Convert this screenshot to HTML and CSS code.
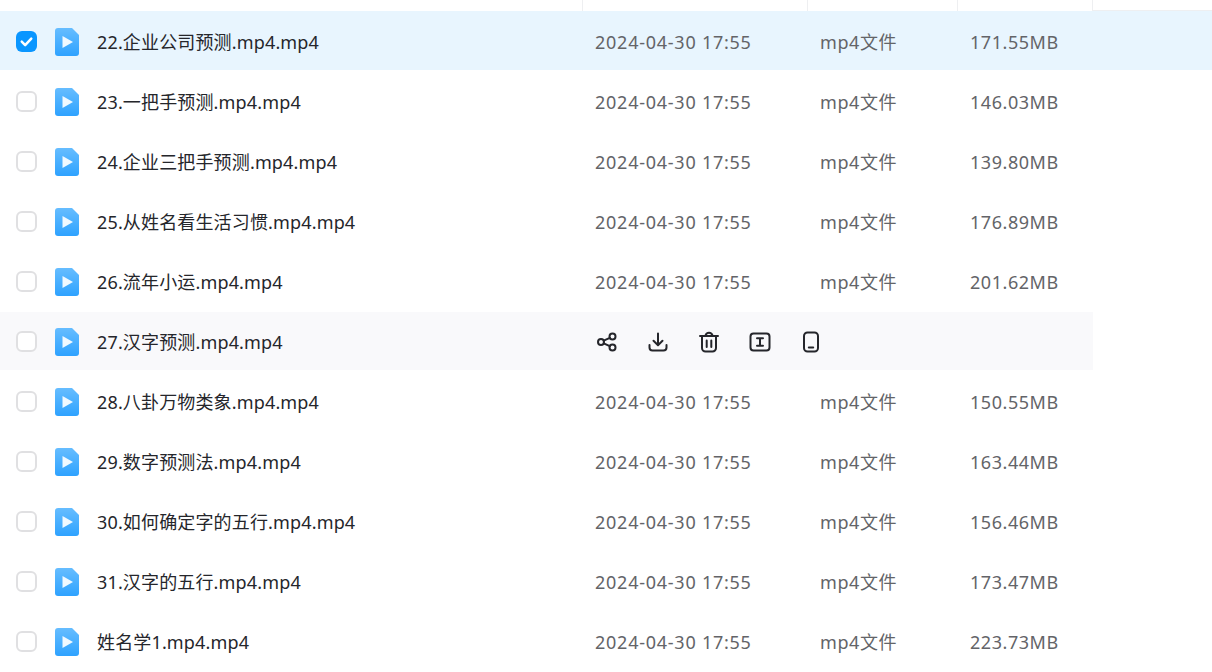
FILE: index.html
```html
<!doctype html>
<html lang="en">
  <head>
    <meta charset="UTF-8" />
    <title>文件列表</title>
    <link rel="stylesheet" href="styles.css">
  </head>
  <body>
    <svg class="defs" width="0" height="0">
      <symbol id="file" viewBox="0 0 24 28">
        <defs>
          <linearGradient id="fileFill" x1="0" y1="0" x2="0" y2="1">
            <stop offset="0" stop-color="#66bdff" />
            <stop offset="1" stop-color="#2ea2ff" />
          </linearGradient>
        </defs>
        <path d="M3 0H17L24 7V25a3 3 0 0 1-3 3H3a3 3 0 0 1-3-3V3a3 3 0 0 1 3-3Z" fill="url(#fileFill)" />
        <path d="M7.5 8 18 14 7.5 20Z" fill="#fff" opacity="0.92" />
      </symbol>
    </svg>

    <div class="head">
      <div class="head-cell name"></div>
      <div class="head-cell date"></div>
      <div class="head-cell type"></div>
      <div class="head-cell size"></div>
      <div class="head-rest"></div>
    </div>

    <div class="list">
      <div class="row selected">
        <span class="check on">
          <svg viewBox="0 0 22 22" width="21" height="21"><path d="M6 11.2 9.6 14.8 16 8" fill="none" stroke="#fff" stroke-width="2.6" stroke-linecap="round" stroke-linejoin="round" /></svg>
        </span>
        <svg class="file"><use href="#file" /></svg>
        <span class="title">22.企业公司预测.mp4.mp4</span>
        <span class="date-text">2024-04-30 17:55</span>
        <span class="type-text">mp4文件</span>
        <span class="size-text">171.55MB</span>
      </div>
      <div class="row">
        <span class="check"></span>
        <svg class="file"><use href="#file" /></svg>
        <span class="title">23.一把手预测.mp4.mp4</span>
        <span class="date-text">2024-04-30 17:55</span>
        <span class="type-text">mp4文件</span>
        <span class="size-text">146.03MB</span>
      </div>
      <div class="row">
        <span class="check"></span>
        <svg class="file"><use href="#file" /></svg>
        <span class="title">24.企业三把手预测.mp4.mp4</span>
        <span class="date-text">2024-04-30 17:55</span>
        <span class="type-text">mp4文件</span>
        <span class="size-text">139.80MB</span>
      </div>
      <div class="row">
        <span class="check"></span>
        <svg class="file"><use href="#file" /></svg>
        <span class="title">25.从姓名看生活习惯.mp4.mp4</span>
        <span class="date-text">2024-04-30 17:55</span>
        <span class="type-text">mp4文件</span>
        <span class="size-text">176.89MB</span>
      </div>
      <div class="row">
        <span class="check"></span>
        <svg class="file"><use href="#file" /></svg>
        <span class="title">26.流年小运.mp4.mp4</span>
        <span class="date-text">2024-04-30 17:55</span>
        <span class="type-text">mp4文件</span>
        <span class="size-text">201.62MB</span>
      </div>
      <div class="row hover">
        <span class="check"></span>
        <svg class="file"><use href="#file" /></svg>
        <span class="title">27.汉字预测.mp4.mp4</span>
        <div class="actions">
          <svg viewBox="0 0 22 22"><circle cx="5" cy="11" r="3" /><circle cx="16.5" cy="5.5" r="3" /><circle cx="16.5" cy="16.5" r="3" /><path d="M7.7 9.7 13.8 6.8M7.7 12.3 13.8 15.2" /></svg>
          <svg viewBox="0 0 22 22"><path d="M11 2.5V14M6.5 9.8 11 14.3 15.5 9.8M2.5 14v2.5a3 3 0 0 0 3 3h11a3 3 0 0 0 3-3V14" /></svg>
          <svg viewBox="0 0 22 22"><path d="M2 5h18M7.5 4.6C8 2.6 9 1.8 11 1.8S14 2.6 14.5 4.6M4 5V17a3.5 3.5 0 0 0 3.5 3.5h7A3.5 3.5 0 0 0 18 17V5M8.7 9.5v6.5M13.3 9.5v6.5" /></svg>
          <svg viewBox="0 0 22 22"><rect x="1.5" y="2.5" width="19" height="17" rx="3" /><path d="M8 7.2h6M8 14.8h6M11 7.2v7.6" /></svg>
          <svg viewBox="0 0 22 22"><rect x="4" y="1.5" width="14" height="19" rx="3.5" /><path d="M8.8 16.5h4.4" /></svg>
        </div>
      </div>
      <div class="row">
        <span class="check"></span>
        <svg class="file"><use href="#file" /></svg>
        <span class="title">28.八卦万物类象.mp4.mp4</span>
        <span class="date-text">2024-04-30 17:55</span>
        <span class="type-text">mp4文件</span>
        <span class="size-text">150.55MB</span>
      </div>
      <div class="row">
        <span class="check"></span>
        <svg class="file"><use href="#file" /></svg>
        <span class="title">29.数字预测法.mp4.mp4</span>
        <span class="date-text">2024-04-30 17:55</span>
        <span class="type-text">mp4文件</span>
        <span class="size-text">163.44MB</span>
      </div>
      <div class="row">
        <span class="check"></span>
        <svg class="file"><use href="#file" /></svg>
        <span class="title">30.如何确定字的五行.mp4.mp4</span>
        <span class="date-text">2024-04-30 17:55</span>
        <span class="type-text">mp4文件</span>
        <span class="size-text">156.46MB</span>
      </div>
      <div class="row">
        <span class="check"></span>
        <svg class="file"><use href="#file" /></svg>
        <span class="title">31.汉字的五行.mp4.mp4</span>
        <span class="date-text">2024-04-30 17:55</span>
        <span class="type-text">mp4文件</span>
        <span class="size-text">173.47MB</span>
      </div>
      <div class="row">
        <span class="check"></span>
        <svg class="file"><use href="#file" /></svg>
        <span class="title">姓名学1.mp4.mp4</span>
        <span class="date-text">2024-04-30 17:55</span>
        <span class="type-text">mp4文件</span>
        <span class="size-text">223.73MB</span>
      </div>
    </div>
  </body>
</html>
```

FILE: styles.css
```css
html,
body {
  margin: 0;
  height: 672px;
  overflow: hidden;
}
body {
  background: #fff;
  font-family: "Noto Sans", "Noto Sans CJK SC", sans-serif;
  font-size: 18px;
}
.defs {
  position: absolute;
}
.head {
  display: grid;
  grid-template-columns: 583px 225px 150px 135px 1fr;
  height: 11px;
  box-sizing: border-box;
}
.head-cell {
  border-right: 1px solid #eeeff1;
}
.head-rest {
  border-bottom: 1px solid #eeeff1;
}
.list {
  display: flex;
  flex-direction: column;
  gap: 2px;
  margin-top: 1px;
}
.row {
  display: grid;
  grid-template-columns: 55px 42px 498px 225px 150px 1fr;
  align-items: center;
  width: 1093px;
  height: 58px;
}
.row.selected {
  width: 1212px;
  margin-top: -1px;
  padding-top: 1px;
  background: #e8f5fe;
}
.row.hover {
  background: #f9f9fb;
}
.check {
  box-sizing: border-box;
  width: 21px;
  height: 21px;
  margin: 1px 0 0 16px;
  border: 2px solid #e0e0e2;
  border-radius: 6px;
  background: #fff;
}
.check.on {
  border: 0;
  background: #0a96ff;
}
.check svg {
  display: block;
}
.file {
  width: 24px;
  height: 28px;
  margin-top: 2px;
}
.title {
  color: #25262b;
  letter-spacing: 0.15px;
  white-space: nowrap;
}
.date-text,
.type-text,
.size-text {
  color: #636468;
  white-space: nowrap;
}
.date-text {
  margin-top: 2px;
  letter-spacing: 0.75px;
}
.type-text {
  letter-spacing: 0.6px;
}
.size-text {
  margin-top: 2px;
  letter-spacing: 0.55px;
}
.actions {
  grid-column: 4 / 7;
  display: flex;
  gap: 29px;
  margin: 2px 0 0 1px;
}
.actions svg {
  width: 22px;
  height: 22px;
  fill: none;
  stroke: #25262b;
  stroke-width: 2;
  stroke-linecap: round;
  stroke-linejoin: round;
}
```
